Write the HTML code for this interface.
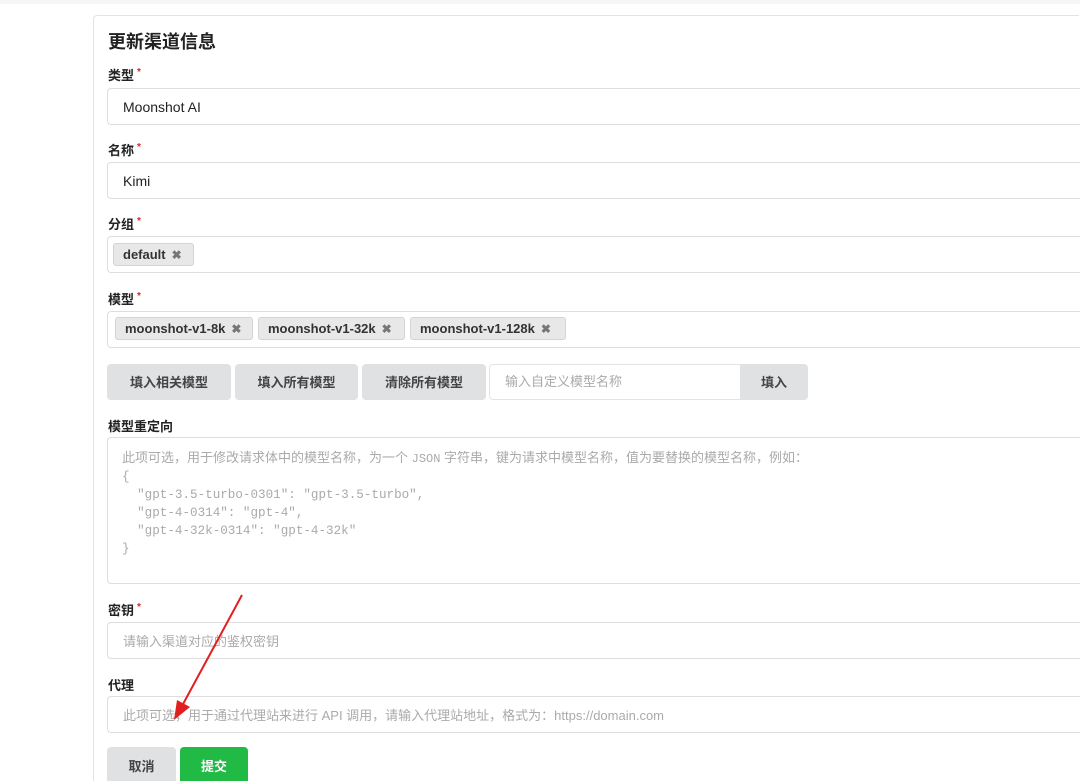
<!DOCTYPE html>
<html style="overflow:hidden;height:781px"><head><meta charset="utf-8"><style>
html,body{margin:0;width:1080px;height:781px;overflow:hidden}
body{background:#fff;font-family:"Liberation Sans","Noto Sans CJK SC",sans-serif;color:#222;position:relative}
.a{position:absolute}
.card{left:93px;top:15px;width:986px;height:766px;border:1px solid #e3e3e3;border-bottom:none;border-right:none;border-radius:4px 0 0 0;box-sizing:border-box}
.lbl{left:108px;font-size:13px;font-weight:bold;color:#222}
.lbl i{color:#db2828;font-style:normal;font-size:10px;position:relative;top:-5px;margin-left:3px}
.inp{left:107px;width:973px;border:1px solid #dedede;border-right:none;border-radius:4px 0 0 4px;box-sizing:border-box;font-size:14px;padding-left:15px;display:flex;align-items:center}
.ph{color:#aaa}
.chip{background:#e8e8e8;border:1px solid #d4d4d4;border-radius:3px;font-size:13px;font-weight:bold;color:#333;height:23px;box-sizing:border-box;display:flex;align-items:center;padding-left:9px}
.chip b{color:#777;margin-left:6px;font-size:12px}
.btn{background:#e0e1e2;border-radius:4px;font-size:13px;font-weight:bold;color:#444;display:flex;align-items:center;justify-content:center;height:36px;top:364px;line-height:1}
</style></head><body>
<div class="a" style="left:0;top:0;width:1080px;height:4px;background:#f6f6f6"></div>
<div class="a card"></div>
<div class="a" style="left:108px;top:28px;font-size:18px;font-weight:bold">更新渠道信息</div>
<div class="a lbl" style="top:65px">类型<i>*</i></div>
<div class="a inp" style="top:88px;height:37px">Moonshot AI</div>
<div class="a lbl" style="top:140px">名称<i>*</i></div>
<div class="a inp" style="top:162px;height:37px">Kimi</div>
<div class="a lbl" style="top:214px">分组<i>*</i></div>
<div class="a inp" style="top:236px;height:37px"></div>
<div class="a chip" style="left:113px;top:243px;width:81px">default<b>✖</b></div>
<div class="a lbl" style="top:289px">模型<i>*</i></div>
<div class="a inp" style="top:311px;height:37px"></div>
<div class="a chip" style="left:115px;top:317px;width:138px">moonshot-v1-8k<b>✖</b></div>
<div class="a chip" style="left:258px;top:317px;width:147px">moonshot-v1-32k<b>✖</b></div>
<div class="a chip" style="left:410px;top:317px;width:156px">moonshot-v1-128k<b>✖</b></div>
<div class="a btn" style="left:107px;width:124px">填入相关模型</div>
<div class="a btn" style="left:235px;width:123px">填入所有模型</div>
<div class="a btn" style="left:362px;width:124px">清除所有模型</div>
<div class="a" style="left:489px;top:364px;width:255px;height:36px;border:1px solid #e3e3e3;border-radius:4px 0 0 4px;box-sizing:border-box;font-size:13px;color:#aaa;padding-left:15px;line-height:34px">输入自定义模型名称</div>
<div class="a btn" style="left:740px;width:68px;border-radius:0 4px 4px 0">填入</div>
<div class="a lbl" style="top:416px">模型重定向</div>
<div class="a" style="left:107px;top:437px;width:973px;height:147px;border:1px solid #dedede;border-right:none;border-radius:4px 0 0 4px;box-sizing:border-box;padding:11px 14px;font-family:'Liberation Mono','Noto Sans CJK SC',monospace;font-size:12.6px;line-height:18px;color:#aaa;white-space:pre;overflow:hidden"><span style="font-family:'Liberation Sans','Noto Sans CJK SC',sans-serif;font-size:13px">此项可选，用于修改请求体中的模型名称，为一个 <span style="font-family:'Liberation Mono',monospace;font-size:12px">JSON</span> 字符串，键为请求中模型名称，值为要替换的模型名称，例如：</span>
{
  "gpt-3.5-turbo-0301": "gpt-3.5-turbo",
  "gpt-4-0314": "gpt-4",
  "gpt-4-32k-0314": "gpt-4-32k"
}</div>
<div class="a lbl" style="top:600px">密钥<i>*</i></div>
<div class="a inp ph" style="top:622px;height:37px;font-size:13px">请输入渠道对应的鉴权密钥</div>
<div class="a lbl" style="top:675px">代理</div>
<div class="a inp ph" style="top:696px;height:37px;font-size:13px">此项可选，用于通过代理站来进行 API 调用，请输入代理站地址，格式为：https://domain.com</div>
<div class="a btn" style="left:107px;top:747px;width:69px;height:34px;border-radius:4px 4px 0 0;padding-top:4px;box-sizing:border-box">取消</div>
<div class="a btn" style="left:180px;top:747px;width:68px;height:34px;border-radius:4px 4px 0 0;padding-top:4px;box-sizing:border-box;background:#21ba45;color:#fff">提交</div>
<svg class="a" style="left:0;top:0" width="1080" height="781"><line x1="242" y1="595" x2="182" y2="706" stroke="#e0201f" stroke-width="2"/><polygon points="174,720 177,700 190,707" fill="#e0201f"/></svg>
</body></html>
